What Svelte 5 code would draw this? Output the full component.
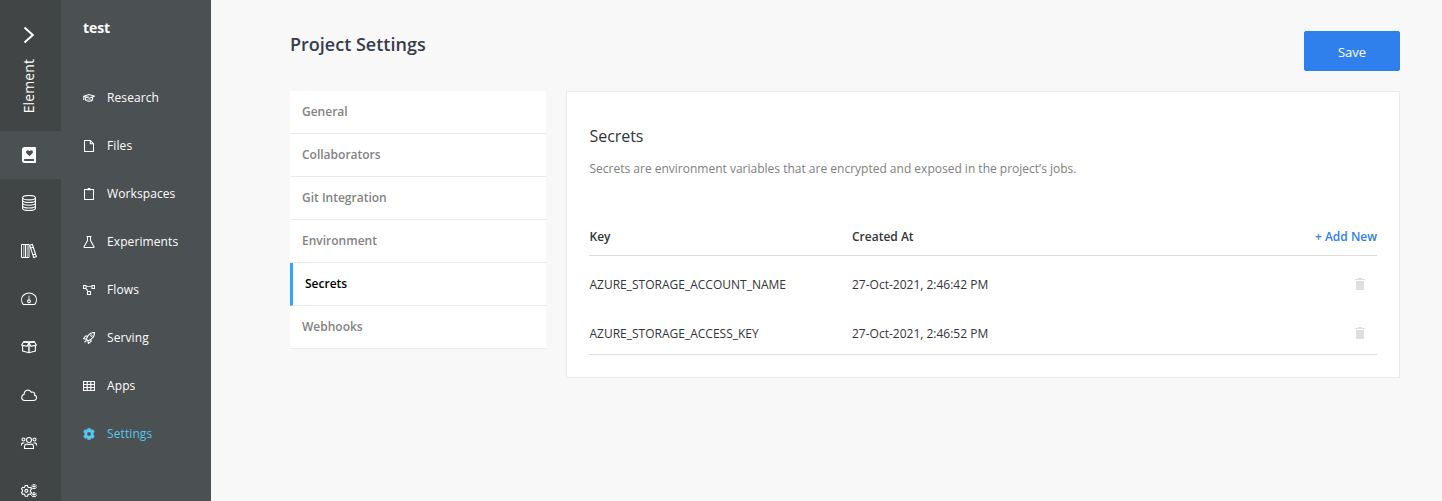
<script>
  const rail = ['book', 'database', 'books', 'gauge', 'box', 'cloud', 'users', 'cogs'];
  const menu = [
    ['cap', 'Research'],
    ['file', 'Files'],
    ['clipboard', 'Workspaces'],
    ['flask', 'Experiments'],
    ['flow', 'Flows'],
    ['rocket', 'Serving'],
    ['grid', 'Apps'],
    ['gear', 'Settings']
  ];
  const tabs = ['General', 'Collaborators', 'Git Integration', 'Environment', 'Secrets', 'Webhooks'];
  const secrets = [
    ['AZURE_STORAGE_ACCOUNT_NAME', '27-Oct-2021, 2:46:42 PM'],
    ['AZURE_STORAGE_ACCESS_KEY', '27-Oct-2021, 2:46:52 PM']
  ];
</script>

{#snippet railIcon(name)}
  <svg width="16" height="16" viewBox="0 0 16 16" fill="none" stroke="#fff" stroke-width="1.1">
    {#if name === 'book'}
      <path fill="#fff" stroke="none" fill-rule="evenodd" d="M3.5 0H14.2a.8.8 0 0 1 .8.8V15.2a.8.8 0 0 1-.8.8H3.5A2.5 2.5 0 0 1 1 13.5v-11A2.5 2.5 0 0 1 3.5 0ZM8.5 9.3 11.5 6.2C13 4.6 10.8 1.9 8.5 4 6.2 1.9 4 4.6 5.5 6.2ZM3.9 12a1 1 0 0 0 0 2H13V12Z" />
    {:else if name === 'database'}
      <ellipse cx="8" cy="2.7" rx="6.4" ry="2.2" />
      <path d="M1.600 2.700V13.200c0 3 12.800 3 12.800 0V2.700M1.600 5.300c0 3 12.800 3 12.800 0M1.600 8c0 3 12.800 3 12.800 0M1.600 10.700c0 3 12.800 3 12.800 0" />
    {:else if name === 'books'}
      <path fill="#fff" fill-opacity=".45" stroke="none" d="M2 2H3.500V14H2ZM5.500 2H7V14H5.500Z" />
      <path d="M.5 1.500H8V14.500H.5ZM4.500 1.500V14.500" stroke-width="1" />
      <path d="m8.700 2.200 2.700-.7 4 12.200-2.700.8ZM9.600 5l2.700-.8M11.800 11.900l2.700-.8" />
    {:else if name === 'gauge'}
      <path d="M2.300 13.500C.2 10.800 0 7 2 4.700 5 1 11 1 14 4.700c2 2.300 1.800 6.100-.3 8.800Z" />
      <path d="M8 4.500V9" stroke-opacity=".75" />
      <circle cx="8" cy="10.300" r="1.400" />
      <path d="M2 13.500H14" />
    {:else if name === 'box'}
      <path d="M8 3.800 2.500 2.900.6 6 6 7.300 8 3.800l2 3.500L15.400 6 13.500 2.900ZM1.600 6.500v5.500L8 13.700l6.400-1.700V6.500" />
      <path d="M8 3.800V13.700" stroke-width="1.8" stroke-opacity=".8" />
      <path d="M2.500 2.700 8 3 13.500 2.700" stroke-width="1.5" />
    {:else if name === 'cloud'}
      <path d="M3.600 13.500H12.500C16 13.500 16.700 9 13.500 8.100 14.400 5.900 12 4.300 10.300 5.300 8.500 1.500 2.900 3 3.200 7.200 0 8-.4 13 3.600 13.500Z" />
    {:else if name === 'users'}
      <circle cx="8" cy="5" r="2.500" />
      <path d="M3.500 13.500V11.800C3.500 9.800 5 9 6 9c1.300.7 2.700.7 4 0 1 0 2.500.8 2.500 2.800V13.500Z" />
      <circle cx="2.500" cy="4.500" r="1.500" />
      <circle cx="13.500" cy="4.500" r="1.500" />
      <path d="M.5 10.500V9.400C.5 8 1.700 7.900 3.500 8M15.500 10.500V9.400C15.500 8 14.300 7.900 12.500 8" />
    {:else if name === 'cogs'}
      <path d="M4.200 2.500H6.500l.5 1.600 1 .6 1.500-.4 1 1.800L9.400 7.200V8.500L10.500 9.600 9.500 11.400 8 11 7 11.600 6.500 13.200H4.200L3.700 11.600 2.900 11 1.500 11.400.5 9.600 1.500 8.500V7.200L.5 6.100 1.500 4.300 2.900 4.700 3.700 4.100Z" />
      <circle cx="5.400" cy="7.850" r="1.500" />
      <path stroke-width="1" d="m12 1.500 1 .5 1-.5 1 1-.3 1 .6.900-1 1.200-1.300-.2-1.300.2-1-1.200.6-.9-.3-1ZM12 9.600l1 .5 1-.5 1 1-.3 1 .6.900-1 1.200-1.300-.2-1.300.2-1-1.200.6-.9-.3-1Z" />
      <circle cx="13" cy="3.500" r=".55" />
      <circle cx="13" cy="11.600" r=".55" />
    {/if}
  </svg>
{/snippet}

{#snippet menuIcon(name)}
  <svg width="12" height="12" viewBox="0 0 12 12" fill="none" stroke="currentColor" stroke-width="1.050">
    {#if name === 'cap'}
      <path d="m.7 4.300 5.100-1.700 5.600 1.500L6.400 6.200ZM2.400 5.400V8C4 9.800 8 9.700 9.600 7.800V5.200M.9 4.500.7 8" stroke-width="1.050" />
      <path d="m2.500 5.300 3.400-1M2.600 7.800H9.300" stroke-width=".8" stroke-opacity=".75" />
    {:else if name === 'file'}
      <path d="M1.500.5H7.300L10.500 3.700V11.500H1.500ZM7.300.5V3.700H10.500" />
    {:else if name === 'clipboard'}
      <path d="M1.500 1.500H10.500V11.500H1.500Z" />
      <path d="M4 1.500H8M5 .6H7" stroke-width="1.300" />
    {:else if name === 'flask'}
      <path d="M3.500.5H8.500M4.500.5V4.500L1 10.700q-.3.800.5.800H10.500q.8 0 .5-.8L7.500 4.500V.5" />
    {:else if name === 'flow'}
      <path d="M.5 1.500H3V4.500H.5ZM9 1.500H11.500V4.500H9ZM4.500 7.500H7.500V10.500H4.500ZM2.900 4.400 4.900 7.300" />
      <path d="M3 2.500H9" stroke-opacity=".75" />
    {:else if name === 'rocket'}
      <path d="M4 8 3.200 7.200 5 3.800C6.500 1.300 8.500.5 11.500.5 11.600 3.500 10.700 5.500 8.300 7L4.900 8.900ZM4.800 4H2.500L.6 6.600 3 7.200M8 7.200V9.500L5.400 11.400 4.900 9M3.300 8.300 1.500 10.400" stroke-width="1.150" />
      <circle cx="8.300" cy="3.600" r=".9" stroke-width=".8" />
    {:else if name === 'grid'}
      <path d="M.5 1.500H11.500V10.500H.5ZM4.200 1.500V10.500M7.800 1.500V10.500M.5 4.500H11.500M.5 7.500H11.500" stroke-width="1.150" />
    {:else if name === 'gear'}
      <path fill="currentColor" stroke="currentColor" stroke-width=".3" fill-rule="evenodd" d="M4.600.2H7.400L7.800 1.600 8.500 2 10.100 1.500 11.600 4 10.400 5.100V6.900L11.600 8 10.100 10.500 8.500 10 7.800 10.400 7.400 11.800H4.600L4.200 10.400 3.500 10 1.900 10.500.4 8 1.600 6.900V5.100L.4 4 1.900 1.500 3.500 2 4.200 1.600ZM6 4a2 2 0 1 0 0 4A2 2 0 0 0 6 4Z" />
    {/if}
  </svg>
{/snippet}

<div class="app">
  <nav class="rail">
    <div class="brand">
      <svg width="12" height="18" viewBox="0 0 12 18" fill="none" stroke="#fff" stroke-width="2"><path d="m1.500 1.500 8.300 7.500-8.300 7.500" /></svg>
      <span>Element</span>
    </div>
    {#each rail as name, i}
      <div class="rail-item" class:active={i === 0}>{@render railIcon(name)}</div>
    {/each}
  </nav>

  <aside>
    <h2>test</h2>
    {#each menu as [icon, label]}
      <div class="menu-item" class:current={label === 'Settings'}>
        {@render menuIcon(icon)}
        <span>{label}</span>
      </div>
    {/each}
  </aside>

  <main>
    <header>
      <h1>Project Settings</h1>
      <button>Save</button>
    </header>
    <div class="content">
      <div class="tabs">
        {#each tabs as tab}
          <div class="tab" class:selected={tab === 'Secrets'}>{tab}</div>
        {/each}
      </div>
      <section>
        <h3>Secrets</h3>
        <p>Secrets are environment variables that are encrypted and exposed in the project’s jobs.</p>
        <div class="table">
          <div class="row head">
            <span>Key</span><span>Created At</span><span class="add">+ Add New</span>
          </div>
          {#each secrets as [key, created]}
            <div class="row">
              <span>{key}</span><span>{created}</span>
              <svg class="trash" width="10" height="12" viewBox="0 0 10 12" fill="#dedede"><path d="M3 0H7V1H10V2H0V1H3ZM1 3H9V11Q9 12 8 12H2Q1 12 1 11Z" /></svg>
            </div>
          {/each}
        </div>
      </section>
    </div>
  </main>
</div>

<style>
  :global(body) {
    margin: 0;
    overflow: hidden;
  }
  .app {
    display: flex;
    height: 501px;
    overflow: hidden;
    background: #f8f8f8;
    color: #333538;
    font: 12px/18px 'Open Sans', sans-serif;
  }
  svg {
    display: block;
    flex: none;
  }
  h1, h2, h3, p {
    margin: 0;
  }
  .rail {
    flex: none;
    width: 61px;
    background: #424545;
  }
  .brand {
    box-sizing: border-box;
    height: 131px;
    padding: 26px 0 0 23px;
    color: #fff;
  }
  .brand span {
    display: block;
    width: 20px;
    margin: 15px 0 0 -4px;
    font-size: 14px;
    font-weight: 500;
    letter-spacing: 0.1px;
    line-height: 20px;
    writing-mode: vertical-rl;
    transform: rotate(180deg);
  }
  .rail-item {
    display: flex;
    align-items: center;
    height: 48px;
    padding-left: 21px;
  }
  .rail-item.active {
    background: #4b5052;
  }
  aside {
    flex: none;
    width: 150px;
    background: #4b5052;
    color: #fff;
  }
  h2 {
    height: 20px;
    padding: 18px 0 36px 22px;
    font-size: 14px;
    font-weight: 700;
    letter-spacing: -0.1px;
    line-height: 20px;
  }
  .menu-item {
    display: flex;
    align-items: center;
    gap: 12px;
    height: 48px;
    padding-left: 22px;
    letter-spacing: 0.1px;
  }
  .current {
    color: #55c8f0;
  }
  main {
    flex: 1;
    padding: 31px 42px 0 79px;
  }
  header {
    display: flex;
    justify-content: space-between;
    height: 60px;
  }
  h1 {
    color: #363b4d;
    font-size: 18px;
    font-weight: 600;
    line-height: 27px;
  }
  button {
    width: 96px;
    height: 40px;
    padding: 2px 0 0;
    border: 1px solid #2684e8;
    border-radius: 2px;
    background: #2f80ed;
    color: #fff;
    font: 500 13px/18px 'Open Sans', sans-serif;
  }
  .content {
    display: flex;
    align-items: flex-start;
    gap: 20px;
  }
  .tabs {
    width: 256px;
  }
  .tab {
    box-sizing: border-box;
    height: 43px;
    padding: 12px;
    border-bottom: 1px solid #ebebeb;
    background: #fff;
    color: #838383;
    font-weight: 600;
  }
  .tab.selected {
    border-left: 3px solid #2ea8ff;
    color: #000;
  }
  section {
    box-sizing: border-box;
    flex: 1;
    height: 287px;
    padding: 32px 22px 0;
    border: 1px solid #ebebeb;
    background: #fff;
  }
  h3 {
    padding-left: 0.5px;
    font-size: 16px;
    font-weight: 400;
    letter-spacing: -0.05px;
    line-height: 24px;
  }
  p {
    margin-top: 12px;
    padding-left: 0.5px;
    color: #808080;
  }
  .table {
    margin-top: 41px;
    border-bottom: 1px solid #ddd;
  }
  .row {
    display: grid;
    grid-template-columns: 262.5px 1fr auto;
    align-items: center;
    height: 41px;
    padding: 8px 0 0 0.5px;
  }
  .row.head {
    box-sizing: border-box;
    height: 37px;
    padding-top: 0;
    border-bottom: 1px solid #ddd;
    font-weight: 600;
  }
  .add {
    color: #2f80ed;
  }
  .trash {
    margin: 0 12px 1px 0;
  }
</style>
